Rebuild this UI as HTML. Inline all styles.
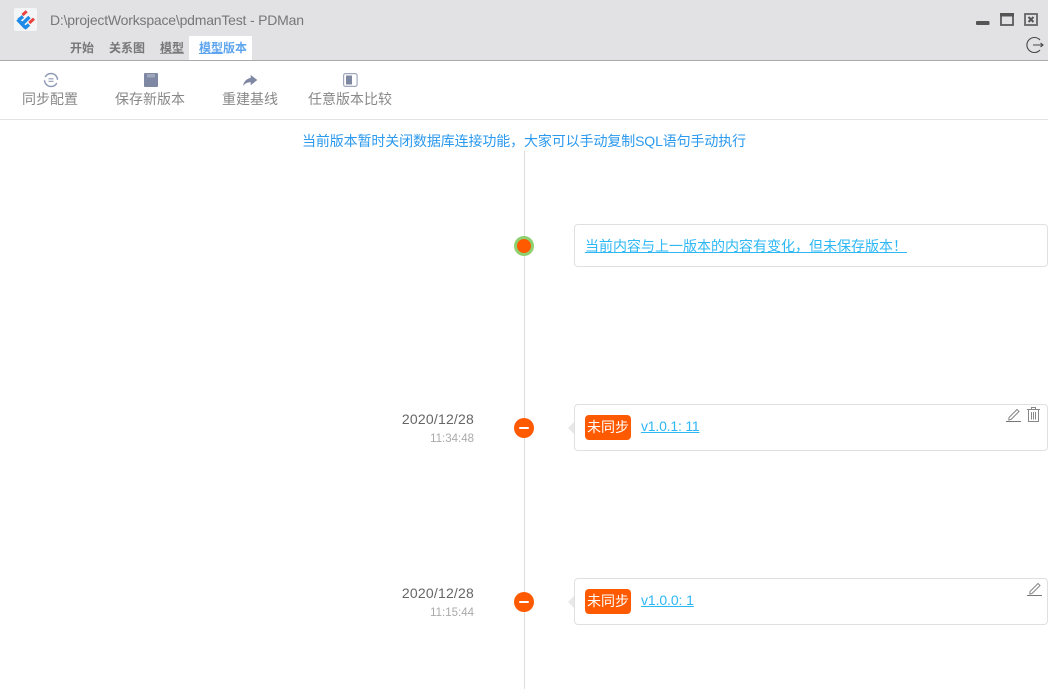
<!DOCTYPE html>
<html lang="zh"><head><meta charset="utf-8"><title>PDMan</title>
<style>
html,body{margin:0;padding:0;width:1048px;height:700px;overflow:hidden;background:#fff}
body{position:relative;font-family:"Liberation Sans","Noto Sans CJK SC",sans-serif;color:#777}
.a{position:absolute;white-space:nowrap}
svg{position:absolute;overflow:visible}
.card{position:absolute;left:574px;width:472px;border:1px solid #e0e0e0;border-radius:4px;background:#fff}
.tag{position:absolute;left:585px;width:46px;height:25px;background:#ff5a00;border-radius:4px;color:#fff;font-size:14px;line-height:25px;text-align:center}
.lnk{color:#2db7f5;text-decoration:underline;font-size:14px;line-height:20px}
.dot{position:absolute;left:514px;width:20px;height:20px;border-radius:50%;background:#ff5a00}
.dot i{position:absolute;left:5px;top:9px;width:10px;height:2px;background:#fff;border-radius:1px}
.date{position:absolute;right:574px;font-size:14px;color:#666;line-height:18px;letter-spacing:.2px}
.time{position:absolute;right:574px;font-size:11.500px;color:#aaa;line-height:16px}
.arrow{position:absolute;left:568px;width:0;height:0;border:6px solid transparent;border-left:0;border-right:6px solid #e8e8e8}
.tb{font-size:14px;color:#888;line-height:20px}
.tab{font-size:12px;line-height:17px;color:#777;font-weight:700}
</style></head><body>
<div class="a" style="left:0;top:0;width:1048px;height:60px;background:#e2e2e4"></div>
<div class="a" style="left:0;top:60px;width:1048px;height:1px;background:#aaa"></div>
<div class="a" style="left:14px;top:8px;width:23px;height:23px;background:#f3f5f7;border-radius:2px"></div>
<svg style="left:14px;top:8px" width="23" height="23" viewBox="0 0 23 23">
<path d="M8.500 7L12.700 3.300M15.300 15L20 10.700" stroke="#e8433f" stroke-width="3" fill="none"/>
<path d="M3.500 11.500L9 13.500L12 20.300Z" fill="#1f8be8"/>
<path d="M4.500 12L9 8.500M8.700 15.500L15.500 9M10.500 20.500L15 16.500M3.500 11.500L11.500 19.800" stroke="#1f8be8" stroke-width="3.400" fill="none"/>
</svg>
<div class="a" style="left:50px;top:11px;font-size:14px;line-height:18px;color:#777;letter-spacing:-.2px">D:\projectWorkspace\pdmanTest - PDMan</div>
<div class="a tab" style="left:70px;top:40px">开始</div>
<div class="a tab" style="left:109px;top:40px">关系图</div>
<div class="a tab" style="left:160px;top:40px;text-decoration:underline;text-decoration-color:#999">模型</div>
<div class="a" style="left:189px;top:36px;width:63px;height:24px;background:#fff"></div>
<div class="a tab" style="left:199px;top:40px;color:#5ea5ee"><span style="text-decoration:underline">模型</span>版本</div>
<svg style="left:976px;top:12px" width="62" height="14" viewBox="0 0 62 14">
<rect x="0" y="9" width="13.500" height="4" rx="1" fill="#555"/>
<rect x="25" y="2" width="12" height="11" fill="none" stroke="#5a5a5a" stroke-width="1.800"/><rect x="24" y="1" width="14" height="3.500" fill="#555"/>
<rect x="49" y="2" width="12" height="11" fill="none" stroke="#666" stroke-width="1.800"/><path d="M52.500 5L57.500 10M57.500 5L52.500 10" stroke="#555" stroke-width="2"/>
</svg>
<svg style="left:1026px;top:36px" width="18" height="18" viewBox="0 0 18 18">
<path d="M14 4A7.500 7.500 0 1 0 14 14" fill="none" stroke="#444" stroke-width="1.100"/><path d="M7 9H17M14.500 7L17 9L14.500 11" fill="none" stroke="#444" stroke-width="1.100"/>
</svg>
<svg style="left:43px;top:72px" width="16" height="16" viewBox="0 0 16 16">
<circle cx="8" cy="8" r="6.500" fill="none" stroke="#8f9ab5" stroke-width="1.500" stroke-dasharray="17 3.400" stroke-dashoffset="-3"/>
<path d="M5.500 6.800H10.500M5.500 9.300H10.500" stroke="#8f9ab5" stroke-width="1.200"/></svg>
<svg style="left:144px;top:73px" width="14" height="14" viewBox="0 0 14 14"><path d="M0 1Q0 0 1 0H13Q14 0 14 1V13Q14 14 13 14H1Q0 14 0 13Z" fill="#7f88a3"/><rect x="3" y="1" width="8" height="3.500" fill="#a0a7bc"/></svg>
<svg style="left:243px;top:73px" width="15" height="14" viewBox="0 0 15 14"><path d="M7.700 2L14.300 7L7.700 12.300V9.300C4.500 9.300 2 10.500 0 13C.8 8.500 3.500 5.500 7.700 5Z" fill="#7f88a3"/></svg>
<svg style="left:343px;top:73px" width="15" height="14" viewBox="0 0 15 14"><rect x=".6" y=".6" width="13.500" height="12.800" rx="1.800" fill="#fff" stroke="#a0a7bc" stroke-width="1.200"/><rect x="3" y="2.500" width="6" height="9" fill="#7f88a3"/></svg>
<div class="a tb" style="left:22px;top:89px">同步配置</div>
<div class="a tb" style="left:115px;top:89px">保存新版本</div>
<div class="a tb" style="left:222px;top:89px">重建基线</div>
<div class="a tb" style="left:308px;top:89px">任意版本比较</div>
<div class="a" style="left:0;top:119px;width:1048px;height:1px;background:#e3e3e3"></div>
<div class="a" style="left:0;width:1048px;top:132px;text-align:center;font-size:14px;line-height:18px;color:#2b99ee;letter-spacing:-.12px">当前版本暂时关闭数据库连接功能，大家可以手动复制SQL语句手动执行</div>
<div class="a" style="left:524px;top:151px;width:1px;height:538px;background:#ddd"></div>
<div class="dot" style="top:236px;background:#ff5a00;box-sizing:border-box;border:3px solid #8fd070"></div>
<div class="card" style="top:224px;height:41px"></div>
<div class="a lnk" style="left:585px;top:236px">当前内容与上一版本的内容有变化，但未保存版本！</div>
<div class="date" style="top:410px">2020/12/28</div>
<div class="time" style="top:431px">11:34:48</div>
<div class="dot" style="top:418px"><i></i></div>
<div class="arrow" style="top:422px"></div>
<div class="card" style="top:404px;height:45px"></div>
<div class="tag" style="top:415px">未同步</div>
<div class="a lnk" style="left:641px;top:416px;letter-spacing:-.2px">v1.0.1: 11</div>
<svg style="left:1006px;top:407px" width="36" height="16" viewBox="0 0 36 16">
<path d="M3 10.500L11 2.500L13 4.500L5 12.500L2.800 13Z" fill="none" stroke="#888" stroke-width="1"/><path d="M0 14.500H15" stroke="#777" stroke-width="1"/>
<path d="M21 2.500H34M25.500 2.500V.5H29.500V2.500M22.500 2.500V14.500H32.500V2.500M25.500 5V12.500M27.500 5V12.500M29.500 5V12.500" fill="none" stroke="#888" stroke-width="1"/></svg>
<div class="date" style="top:584px">2020/12/28</div>
<div class="time" style="top:605px">11:15:44</div>
<div class="dot" style="top:592px"><i></i></div>
<div class="arrow" style="top:596px"></div>
<div class="card" style="top:578px;height:45px"></div>
<div class="tag" style="top:589px">未同步</div>
<div class="a lnk" style="left:641px;top:590px;letter-spacing:-.1px">v1.0.0: 1</div>
<svg style="left:1027px;top:581px" width="16" height="16" viewBox="0 0 16 16">
<path d="M3 10.500L11 2.500L13 4.500L5 12.500L2.800 13Z" fill="none" stroke="#888" stroke-width="1"/><path d="M0 14.500H15" stroke="#777" stroke-width="1"/></svg>
</body></html>
